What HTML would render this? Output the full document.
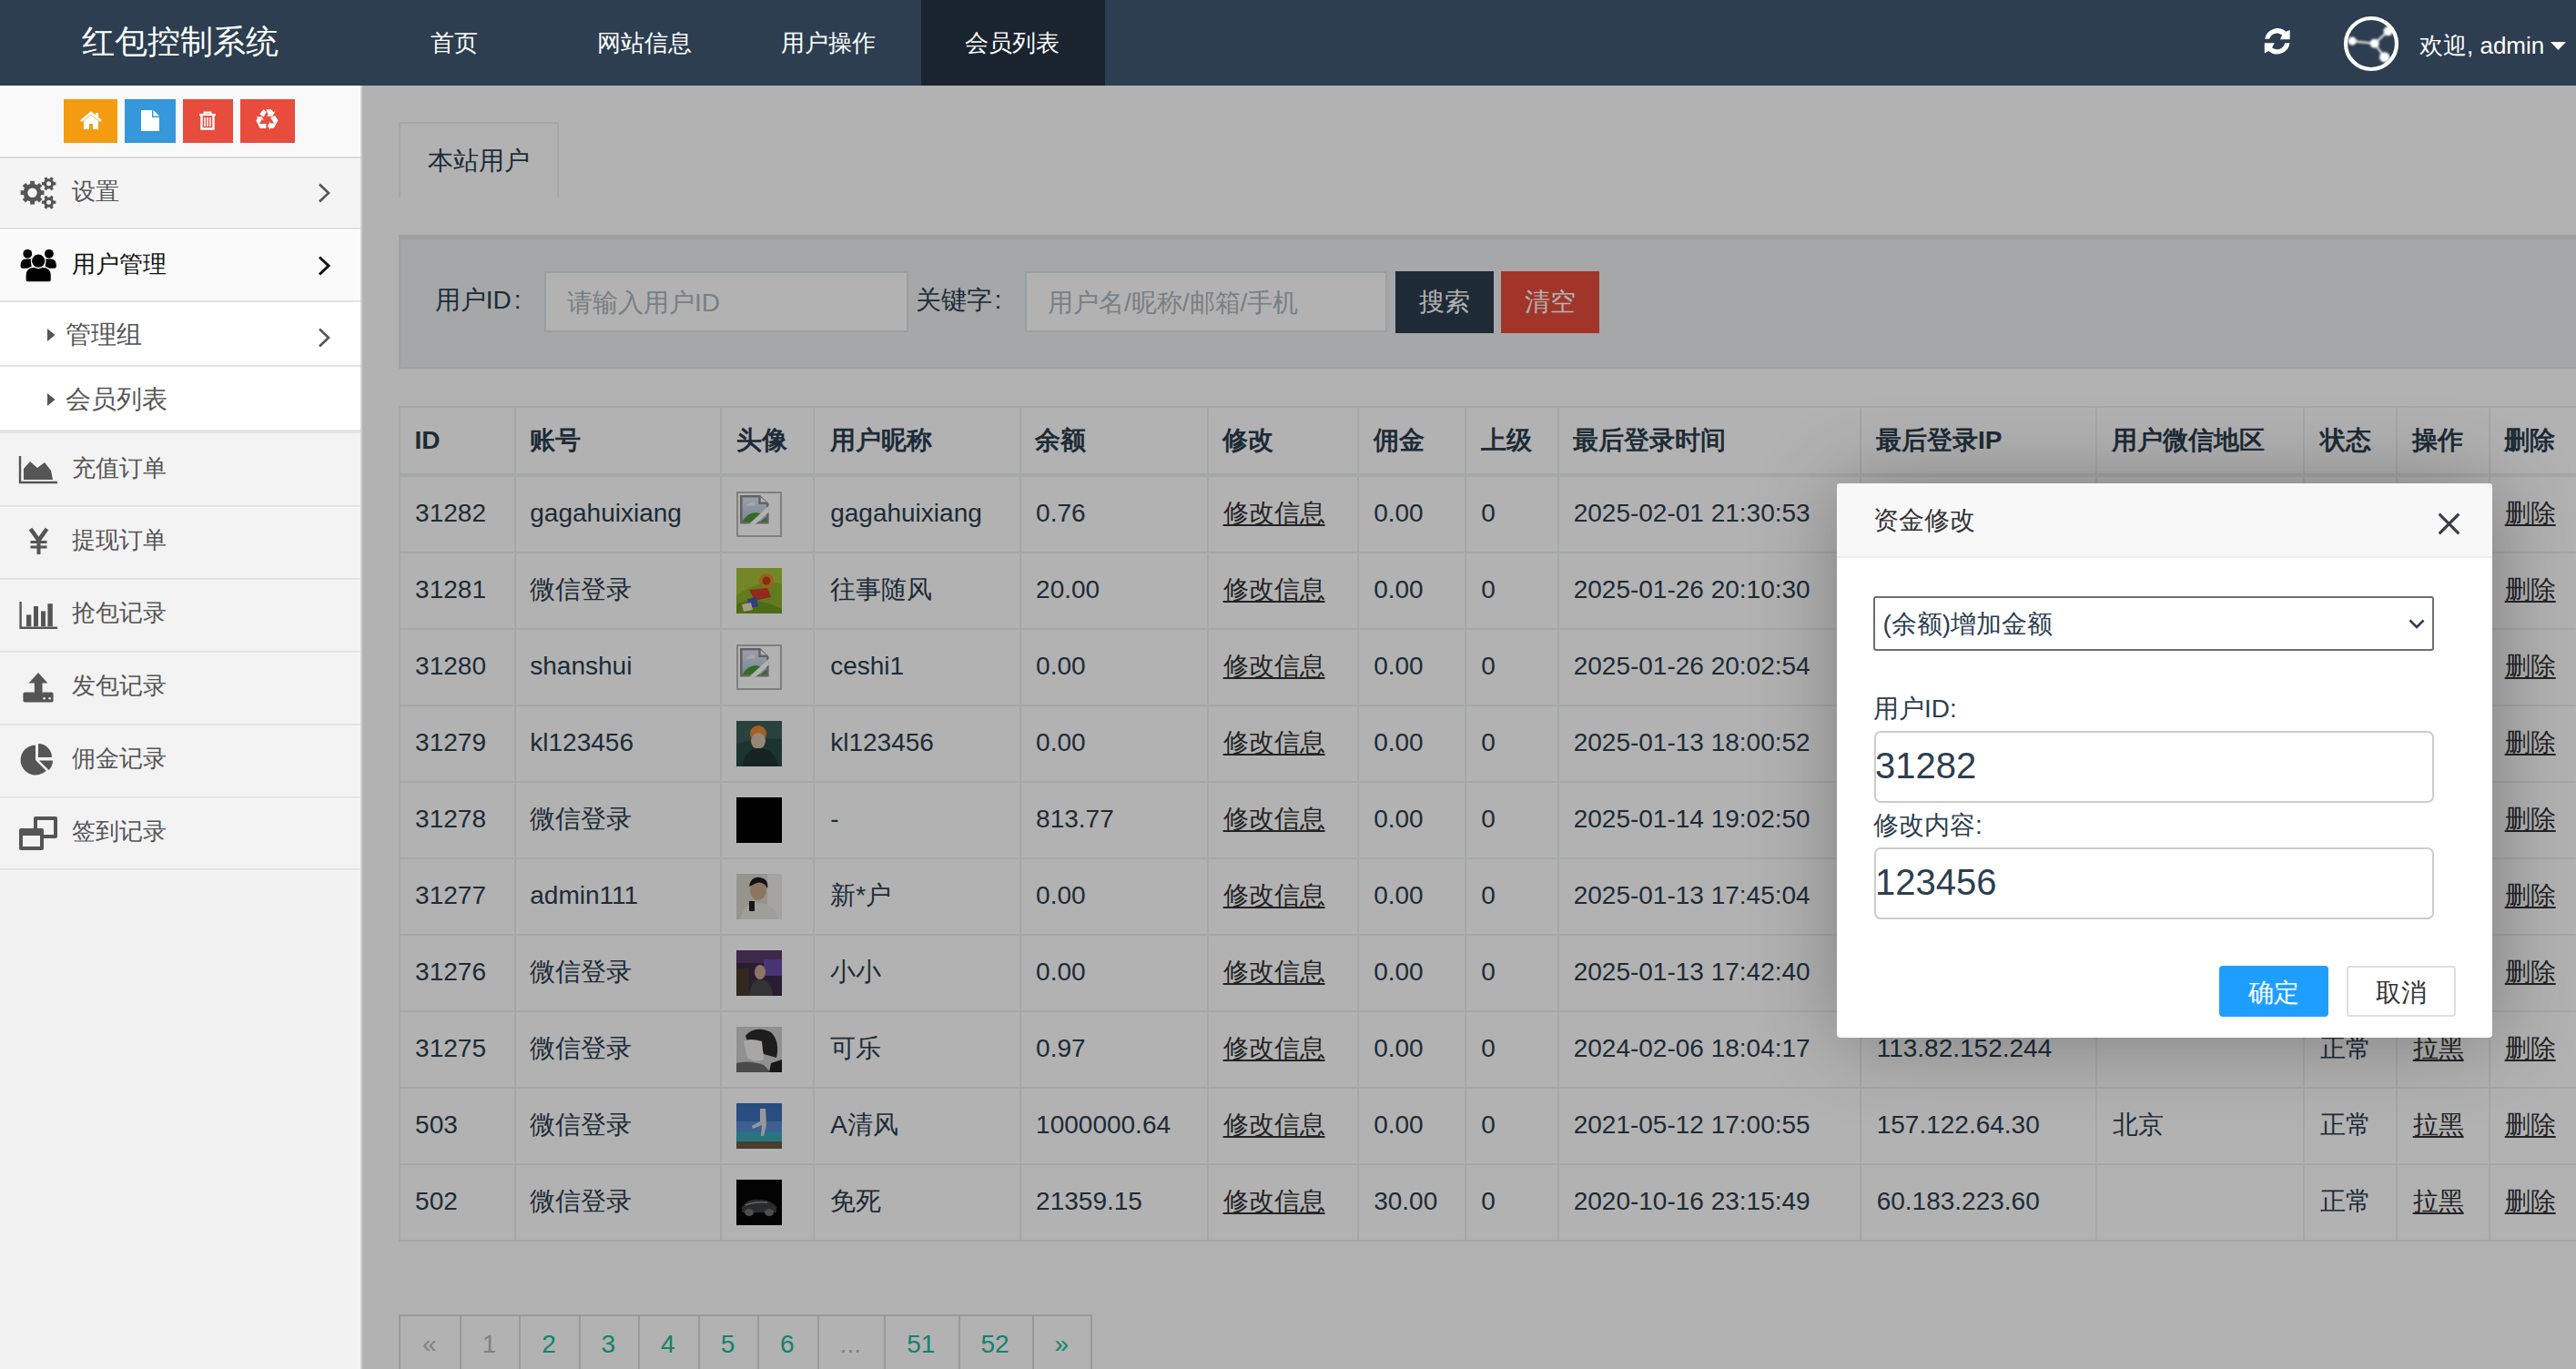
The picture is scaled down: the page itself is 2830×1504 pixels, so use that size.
<!DOCTYPE html><html><head><meta charset="utf-8"><title>红包控制系统</title><style>
*{margin:0;padding:0;box-sizing:border-box}
html,body{width:2830px;height:1504px;overflow:hidden;background:#fff;font-family:"Liberation Sans",sans-serif}
.t{position:absolute;white-space:nowrap;display:block}
.r{position:absolute}
.u{text-decoration:underline;text-decoration-thickness:2px;text-underline-offset:3px}
svg{position:absolute;overflow:visible}
</style></head><body>
<div class="r" style="left:398px;top:94px;width:2432px;height:1410px;background:#ffffff;"></div>
<div class="r" style="left:438px;top:134px;width:176px;height:83px;border:2px solid #ecf0f1;border-bottom:none"></div>
<span class="t " style="left:470px;top:162.5px;font-size:28px;line-height:28px;color:#2c3e50;font-weight:400;">本站用户</span>
<div class="r" style="left:438px;top:258px;width:2500px;height:147px;background:#ecf0f1;border:2px solid #e3e8ea;box-shadow:inset 0 3px 3px rgba(0,0,0,.05)"></div>
<span class="t " style="left:477.8px;top:316.2px;font-size:28px;line-height:28px;color:#2c3e50;font-weight:400;">用户ID</span>
<span class="t " style="left:564.7px;top:315.6px;font-size:28px;line-height:28px;color:#2c3e50;font-weight:400;">:</span>
<div class="r" style="left:598px;top:298px;width:400px;height:67px;background:#fff;border:2px solid #dce4ec"></div>
<span class="t " style="left:623px;top:318.5px;font-size:28px;line-height:28px;color:#acb6c0;font-weight:400;">请输入用户ID</span>
<span class="t " style="left:1005.5px;top:316.2px;font-size:28px;line-height:28px;color:#2c3e50;font-weight:400;">关键字</span>
<span class="t " style="left:1092.4px;top:315.6px;font-size:28px;line-height:28px;color:#2c3e50;font-weight:400;">:</span>
<div class="r" style="left:1126px;top:298px;width:398px;height:67px;background:#fff;border:2px solid #dce4ec"></div>
<span class="t " style="left:1151px;top:318.5px;font-size:28px;line-height:28px;color:#acb6c0;font-weight:400;">用户名/昵称/邮箱/手机</span>
<div class="r" style="left:1533px;top:298px;width:108px;height:68px;background:#2c3e50;"></div>
<span class="t " style="left:1559px;top:318px;font-size:28px;line-height:28px;color:#ffffff;font-weight:400;">搜索</span>
<div class="r" style="left:1649px;top:298px;width:108px;height:68px;background:#e74c3c;"></div>
<span class="t " style="left:1675px;top:318px;font-size:28px;line-height:28px;color:#ffffff;font-weight:400;">清空</span>
<div class="r" style="left:438px;top:446px;width:2392px;height:2px;background:#ecf0f1;"></div>
<div class="r" style="left:438px;top:520px;width:2392px;height:4px;background:#ecf0f1;"></div>
<div class="r" style="left:438px;top:606px;width:2392px;height:2px;background:#ecf0f1;"></div>
<div class="r" style="left:438px;top:690px;width:2392px;height:2px;background:#ecf0f1;"></div>
<div class="r" style="left:438px;top:774px;width:2392px;height:2px;background:#ecf0f1;"></div>
<div class="r" style="left:438px;top:858px;width:2392px;height:2px;background:#ecf0f1;"></div>
<div class="r" style="left:438px;top:942px;width:2392px;height:2px;background:#ecf0f1;"></div>
<div class="r" style="left:438px;top:1026px;width:2392px;height:2px;background:#ecf0f1;"></div>
<div class="r" style="left:438px;top:1110px;width:2392px;height:2px;background:#ecf0f1;"></div>
<div class="r" style="left:438px;top:1194px;width:2392px;height:2px;background:#ecf0f1;"></div>
<div class="r" style="left:438px;top:1278px;width:2392px;height:2px;background:#ecf0f1;"></div>
<div class="r" style="left:438px;top:1362px;width:2392px;height:2px;background:#ecf0f1;"></div>
<div class="r" style="left:438px;top:446px;width:2px;height:918px;background:#ecf0f1;"></div>
<div class="r" style="left:565px;top:446px;width:2px;height:918px;background:#ecf0f1;"></div>
<div class="r" style="left:791px;top:446px;width:2px;height:918px;background:#ecf0f1;"></div>
<div class="r" style="left:893px;top:446px;width:2px;height:918px;background:#ecf0f1;"></div>
<div class="r" style="left:1120px;top:446px;width:2px;height:918px;background:#ecf0f1;"></div>
<div class="r" style="left:1326px;top:446px;width:2px;height:918px;background:#ecf0f1;"></div>
<div class="r" style="left:1491px;top:446px;width:2px;height:918px;background:#ecf0f1;"></div>
<div class="r" style="left:1609px;top:446px;width:2px;height:918px;background:#ecf0f1;"></div>
<div class="r" style="left:1711px;top:446px;width:2px;height:918px;background:#ecf0f1;"></div>
<div class="r" style="left:2043px;top:446px;width:2px;height:918px;background:#ecf0f1;"></div>
<div class="r" style="left:2302px;top:446px;width:2px;height:918px;background:#ecf0f1;"></div>
<div class="r" style="left:2530px;top:446px;width:2px;height:918px;background:#ecf0f1;"></div>
<div class="r" style="left:2632px;top:446px;width:2px;height:918px;background:#ecf0f1;"></div>
<div class="r" style="left:2734px;top:446px;width:2px;height:918px;background:#ecf0f1;"></div>
<span class="t " style="left:455.4px;top:470px;font-size:28px;line-height:28px;color:#2c3e50;font-weight:700;">ID</span>
<span class="t " style="left:581.6px;top:470px;font-size:28px;line-height:28px;color:#2c3e50;font-weight:700;">账号</span>
<span class="t " style="left:808.9px;top:470px;font-size:28px;line-height:28px;color:#2c3e50;font-weight:700;">头像</span>
<span class="t " style="left:911.5px;top:470px;font-size:28px;line-height:28px;color:#2c3e50;font-weight:700;">用户昵称</span>
<span class="t " style="left:1137.4px;top:470px;font-size:28px;line-height:28px;color:#2c3e50;font-weight:700;">余额</span>
<span class="t " style="left:1342.9px;top:470px;font-size:28px;line-height:28px;color:#2c3e50;font-weight:700;">修改</span>
<span class="t " style="left:1508.5px;top:470px;font-size:28px;line-height:28px;color:#2c3e50;font-weight:700;">佣金</span>
<span class="t " style="left:1626.6px;top:470px;font-size:28px;line-height:28px;color:#2c3e50;font-weight:700;">上级</span>
<span class="t " style="left:1728px;top:470px;font-size:28px;line-height:28px;color:#2c3e50;font-weight:700;">最后登录时间</span>
<span class="t " style="left:2061px;top:470px;font-size:28px;line-height:28px;color:#2c3e50;font-weight:700;">最后登录IP</span>
<span class="t " style="left:2320.4px;top:470px;font-size:28px;line-height:28px;color:#2c3e50;font-weight:700;">用户微信地区</span>
<span class="t " style="left:2548.6px;top:470px;font-size:28px;line-height:28px;color:#2c3e50;font-weight:700;">状态</span>
<span class="t " style="left:2650px;top:470px;font-size:28px;line-height:28px;color:#2c3e50;font-weight:700;">操作</span>
<span class="t " style="left:2751px;top:470px;font-size:28px;line-height:28px;color:#2c3e50;font-weight:700;">删除</span>
<span class="t " style="left:456.1px;top:550px;font-size:28px;line-height:28px;color:#2c3e50;font-weight:400;">31282</span>
<span class="t " style="left:582.3px;top:550px;font-size:28px;line-height:28px;color:#2c3e50;font-weight:400;">gagahuixiang</span>
<div class="r" style="left:809px;top:540px;width:50px;height:50px;border:2px solid #b8b8b8"></div>
<svg style="left:813px;top:544px" width="32" height="32" viewBox="0 0 32 32"><defs><linearGradient id="sky" x1="0" y1="0" x2="0" y2="1"><stop offset="0" stop-color="#dde6f4"/><stop offset="1" stop-color="#aebfdc"/></linearGradient></defs><path d="M1.3 1.3H21.5L30.3 10V30.3H1.3Z" fill="url(#sky)" stroke="#8e8e8e" stroke-width="2.6"/><path d="M21.5 1.3V8.8H30.3" fill="#fff" stroke="#8e8e8e" stroke-width="2.4"/><path d="M2.6 29Q9 18.5 18 19Q22 19.5 24.5 21.5L18 29Z" fill="#4a9a32"/><path d="M22.5 29L29 23.5V29Z" fill="#4a9a32"/><path d="M9.8 31.8L31.8 11.6V18.2L17 31.8Z" fill="#ffffff"/><path d="M6.5 12Q8 8.5 11 9Q12.5 6.5 15 8Q17 8.5 16.5 11.5H6.5Z" fill="#f2f2f2"/></svg>
<span class="t " style="left:912.2px;top:550px;font-size:28px;line-height:28px;color:#2c3e50;font-weight:400;">gagahuixiang</span>
<span class="t " style="left:1138.1px;top:550px;font-size:28px;line-height:28px;color:#2c3e50;font-weight:400;">0.76</span>
<span class="t u" style="left:1343.6px;top:550px;font-size:28px;line-height:28px;color:#333333;font-weight:400;">修改信息</span>
<span class="t " style="left:1509.2px;top:550px;font-size:28px;line-height:28px;color:#2c3e50;font-weight:400;">0.00</span>
<span class="t " style="left:1627.3px;top:550px;font-size:28px;line-height:28px;color:#2c3e50;font-weight:400;">0</span>
<span class="t " style="left:1728.7px;top:550px;font-size:28px;line-height:28px;color:#2c3e50;font-weight:400;">2025-02-01 21:30:53</span>
<span class="t u" style="left:2751.7px;top:550px;font-size:28px;line-height:28px;color:#333333;font-weight:400;">删除</span>
<span class="t " style="left:456.1px;top:634px;font-size:28px;line-height:28px;color:#2c3e50;font-weight:400;">31281</span>
<span class="t " style="left:582.3px;top:634px;font-size:28px;line-height:28px;color:#2c3e50;font-weight:400;">微信登录</span>
<svg style="left:809px;top:624px" width="50" height="50" viewBox="0 0 50 50"><rect width="50" height="50" fill="#8cb02a"/><path d="M0 0H50V18Q30 10 0 30Z" fill="#a6c23a"/><path d="M0 40Q20 30 50 45V50H0Z" fill="#6f9a22"/><circle cx="33" cy="14" r="8" fill="#e08a2a"/><circle cx="33" cy="14" r="4.5" fill="#c0401a"/><path d="M14 24L34 22L38 32L20 36Z" fill="#d63a2a"/><path d="M12 34L22 32L24 42L14 44Z" fill="#4a58b8"/><path d="M6 40L16 38L18 46L8 48Z" fill="#f0e0c0"/></svg>
<span class="t " style="left:912.2px;top:634px;font-size:28px;line-height:28px;color:#2c3e50;font-weight:400;">往事随风</span>
<span class="t " style="left:1138.1px;top:634px;font-size:28px;line-height:28px;color:#2c3e50;font-weight:400;">20.00</span>
<span class="t u" style="left:1343.6px;top:634px;font-size:28px;line-height:28px;color:#333333;font-weight:400;">修改信息</span>
<span class="t " style="left:1509.2px;top:634px;font-size:28px;line-height:28px;color:#2c3e50;font-weight:400;">0.00</span>
<span class="t " style="left:1627.3px;top:634px;font-size:28px;line-height:28px;color:#2c3e50;font-weight:400;">0</span>
<span class="t " style="left:1728.7px;top:634px;font-size:28px;line-height:28px;color:#2c3e50;font-weight:400;">2025-01-26 20:10:30</span>
<span class="t u" style="left:2751.7px;top:634px;font-size:28px;line-height:28px;color:#333333;font-weight:400;">删除</span>
<span class="t " style="left:456.1px;top:718px;font-size:28px;line-height:28px;color:#2c3e50;font-weight:400;">31280</span>
<span class="t " style="left:582.3px;top:718px;font-size:28px;line-height:28px;color:#2c3e50;font-weight:400;">shanshui</span>
<div class="r" style="left:809px;top:708px;width:50px;height:50px;border:2px solid #b8b8b8"></div>
<svg style="left:813px;top:712px" width="32" height="32" viewBox="0 0 32 32"><defs><linearGradient id="sky" x1="0" y1="0" x2="0" y2="1"><stop offset="0" stop-color="#dde6f4"/><stop offset="1" stop-color="#aebfdc"/></linearGradient></defs><path d="M1.3 1.3H21.5L30.3 10V30.3H1.3Z" fill="url(#sky)" stroke="#8e8e8e" stroke-width="2.6"/><path d="M21.5 1.3V8.8H30.3" fill="#fff" stroke="#8e8e8e" stroke-width="2.4"/><path d="M2.6 29Q9 18.5 18 19Q22 19.5 24.5 21.5L18 29Z" fill="#4a9a32"/><path d="M22.5 29L29 23.5V29Z" fill="#4a9a32"/><path d="M9.8 31.8L31.8 11.6V18.2L17 31.8Z" fill="#ffffff"/><path d="M6.5 12Q8 8.5 11 9Q12.5 6.5 15 8Q17 8.5 16.5 11.5H6.5Z" fill="#f2f2f2"/></svg>
<span class="t " style="left:912.2px;top:718px;font-size:28px;line-height:28px;color:#2c3e50;font-weight:400;">ceshi1</span>
<span class="t " style="left:1138.1px;top:718px;font-size:28px;line-height:28px;color:#2c3e50;font-weight:400;">0.00</span>
<span class="t u" style="left:1343.6px;top:718px;font-size:28px;line-height:28px;color:#333333;font-weight:400;">修改信息</span>
<span class="t " style="left:1509.2px;top:718px;font-size:28px;line-height:28px;color:#2c3e50;font-weight:400;">0.00</span>
<span class="t " style="left:1627.3px;top:718px;font-size:28px;line-height:28px;color:#2c3e50;font-weight:400;">0</span>
<span class="t " style="left:1728.7px;top:718px;font-size:28px;line-height:28px;color:#2c3e50;font-weight:400;">2025-01-26 20:02:54</span>
<span class="t u" style="left:2751.7px;top:718px;font-size:28px;line-height:28px;color:#333333;font-weight:400;">删除</span>
<span class="t " style="left:456.1px;top:802px;font-size:28px;line-height:28px;color:#2c3e50;font-weight:400;">31279</span>
<span class="t " style="left:582.3px;top:802px;font-size:28px;line-height:28px;color:#2c3e50;font-weight:400;">kl123456</span>
<svg style="left:809px;top:792px" width="50" height="50" viewBox="0 0 50 50"><rect width="50" height="50" fill="#2a4a44"/><path d="M0 0H50V20Q30 18 0 25Z" fill="#3d5e58"/><circle cx="24" cy="14" r="9" fill="#e98a3a"/><ellipse cx="24" cy="22" rx="8" ry="9" fill="#d8c0a8"/><path d="M6 50Q10 30 25 30Q42 30 46 50Z" fill="#1f3430"/></svg>
<span class="t " style="left:912.2px;top:802px;font-size:28px;line-height:28px;color:#2c3e50;font-weight:400;">kl123456</span>
<span class="t " style="left:1138.1px;top:802px;font-size:28px;line-height:28px;color:#2c3e50;font-weight:400;">0.00</span>
<span class="t u" style="left:1343.6px;top:802px;font-size:28px;line-height:28px;color:#333333;font-weight:400;">修改信息</span>
<span class="t " style="left:1509.2px;top:802px;font-size:28px;line-height:28px;color:#2c3e50;font-weight:400;">0.00</span>
<span class="t " style="left:1627.3px;top:802px;font-size:28px;line-height:28px;color:#2c3e50;font-weight:400;">0</span>
<span class="t " style="left:1728.7px;top:802px;font-size:28px;line-height:28px;color:#2c3e50;font-weight:400;">2025-01-13 18:00:52</span>
<span class="t u" style="left:2751.7px;top:802px;font-size:28px;line-height:28px;color:#333333;font-weight:400;">删除</span>
<span class="t " style="left:456.1px;top:886px;font-size:28px;line-height:28px;color:#2c3e50;font-weight:400;">31278</span>
<span class="t " style="left:582.3px;top:886px;font-size:28px;line-height:28px;color:#2c3e50;font-weight:400;">微信登录</span>
<div class="r" style="left:809px;top:876px;width:50px;height:50px;background:#000;"></div>
<span class="t " style="left:912.2px;top:886px;font-size:28px;line-height:28px;color:#2c3e50;font-weight:400;">-</span>
<span class="t " style="left:1138.1px;top:886px;font-size:28px;line-height:28px;color:#2c3e50;font-weight:400;">813.77</span>
<span class="t u" style="left:1343.6px;top:886px;font-size:28px;line-height:28px;color:#333333;font-weight:400;">修改信息</span>
<span class="t " style="left:1509.2px;top:886px;font-size:28px;line-height:28px;color:#2c3e50;font-weight:400;">0.00</span>
<span class="t " style="left:1627.3px;top:886px;font-size:28px;line-height:28px;color:#2c3e50;font-weight:400;">0</span>
<span class="t " style="left:1728.7px;top:886px;font-size:28px;line-height:28px;color:#2c3e50;font-weight:400;">2025-01-14 19:02:50</span>
<span class="t u" style="left:2751.7px;top:886px;font-size:28px;line-height:28px;color:#333333;font-weight:400;">删除</span>
<span class="t " style="left:456.1px;top:970px;font-size:28px;line-height:28px;color:#2c3e50;font-weight:400;">31277</span>
<span class="t " style="left:582.3px;top:970px;font-size:28px;line-height:28px;color:#2c3e50;font-weight:400;">admin111</span>
<svg style="left:809px;top:960px" width="50" height="50" viewBox="0 0 50 50"><rect width="50" height="50" fill="#d8d4cc"/><rect x="34" y="0" width="16" height="50" fill="#ecebe6"/><ellipse cx="24" cy="18" rx="9" ry="11" fill="#c9a88c"/><path d="M14 14Q16 2 26 4Q36 6 34 16Q30 8 22 10Z" fill="#1a1a1a"/><path d="M4 50Q8 32 24 32Q42 32 46 50Z" fill="#e6e2dc"/><rect x="14" y="30" width="6" height="11" fill="#222"/></svg>
<span class="t " style="left:912.2px;top:970px;font-size:28px;line-height:28px;color:#2c3e50;font-weight:400;">新*户</span>
<span class="t " style="left:1138.1px;top:970px;font-size:28px;line-height:28px;color:#2c3e50;font-weight:400;">0.00</span>
<span class="t u" style="left:1343.6px;top:970px;font-size:28px;line-height:28px;color:#333333;font-weight:400;">修改信息</span>
<span class="t " style="left:1509.2px;top:970px;font-size:28px;line-height:28px;color:#2c3e50;font-weight:400;">0.00</span>
<span class="t " style="left:1627.3px;top:970px;font-size:28px;line-height:28px;color:#2c3e50;font-weight:400;">0</span>
<span class="t " style="left:1728.7px;top:970px;font-size:28px;line-height:28px;color:#2c3e50;font-weight:400;">2025-01-13 17:45:04</span>
<span class="t u" style="left:2751.7px;top:970px;font-size:28px;line-height:28px;color:#333333;font-weight:400;">删除</span>
<span class="t " style="left:456.1px;top:1054px;font-size:28px;line-height:28px;color:#2c3e50;font-weight:400;">31276</span>
<span class="t " style="left:582.3px;top:1054px;font-size:28px;line-height:28px;color:#2c3e50;font-weight:400;">微信登录</span>
<svg style="left:809px;top:1044px" width="50" height="50" viewBox="0 0 50 50"><rect width="50" height="50" fill="#3a2a48"/><rect x="0" y="0" width="50" height="14" fill="#5a3c6a"/><rect x="30" y="10" width="20" height="18" fill="#6a4aa8"/><rect x="0" y="20" width="14" height="30" fill="#4a3a2a"/><ellipse cx="26" cy="24" rx="6" ry="8" fill="#c8a890"/><path d="M14 50Q16 32 26 32Q38 32 40 50Z" fill="#4a4a4a"/></svg>
<span class="t " style="left:912.2px;top:1054px;font-size:28px;line-height:28px;color:#2c3e50;font-weight:400;">小小</span>
<span class="t " style="left:1138.1px;top:1054px;font-size:28px;line-height:28px;color:#2c3e50;font-weight:400;">0.00</span>
<span class="t u" style="left:1343.6px;top:1054px;font-size:28px;line-height:28px;color:#333333;font-weight:400;">修改信息</span>
<span class="t " style="left:1509.2px;top:1054px;font-size:28px;line-height:28px;color:#2c3e50;font-weight:400;">0.00</span>
<span class="t " style="left:1627.3px;top:1054px;font-size:28px;line-height:28px;color:#2c3e50;font-weight:400;">0</span>
<span class="t " style="left:1728.7px;top:1054px;font-size:28px;line-height:28px;color:#2c3e50;font-weight:400;">2025-01-13 17:42:40</span>
<span class="t u" style="left:2751.7px;top:1054px;font-size:28px;line-height:28px;color:#333333;font-weight:400;">删除</span>
<span class="t " style="left:456.1px;top:1138px;font-size:28px;line-height:28px;color:#2c3e50;font-weight:400;">31275</span>
<span class="t " style="left:582.3px;top:1138px;font-size:28px;line-height:28px;color:#2c3e50;font-weight:400;">微信登录</span>
<svg style="left:809px;top:1128px" width="50" height="50" viewBox="0 0 50 50"><rect width="50" height="50" fill="#cfcfcf"/><path d="M10 10Q20 -2 38 6Q48 16 44 34L30 30Q26 14 12 16Z" fill="#2a2a2a"/><path d="M8 16Q14 12 28 16L30 36Q20 40 12 34Z" fill="#f2efea"/><path d="M0 50L0 40Q14 36 30 42L38 50Z" fill="#6a6a6a"/><path d="M38 40L50 36V50H36Z" fill="#202020"/></svg>
<span class="t " style="left:912.2px;top:1138px;font-size:28px;line-height:28px;color:#2c3e50;font-weight:400;">可乐</span>
<span class="t " style="left:1138.1px;top:1138px;font-size:28px;line-height:28px;color:#2c3e50;font-weight:400;">0.97</span>
<span class="t u" style="left:1343.6px;top:1138px;font-size:28px;line-height:28px;color:#333333;font-weight:400;">修改信息</span>
<span class="t " style="left:1509.2px;top:1138px;font-size:28px;line-height:28px;color:#2c3e50;font-weight:400;">0.00</span>
<span class="t " style="left:1627.3px;top:1138px;font-size:28px;line-height:28px;color:#2c3e50;font-weight:400;">0</span>
<span class="t " style="left:1728.7px;top:1138px;font-size:28px;line-height:28px;color:#2c3e50;font-weight:400;">2024-02-06 18:04:17</span>
<span class="t " style="left:2061.7px;top:1138px;font-size:28px;line-height:28px;color:#2c3e50;font-weight:400;">113.82.152.244</span>
<span class="t " style="left:2549.3px;top:1138px;font-size:28px;line-height:28px;color:#2c3e50;font-weight:400;">正常</span>
<span class="t u" style="left:2650.7px;top:1138px;font-size:28px;line-height:28px;color:#333333;font-weight:400;">拉黑</span>
<span class="t u" style="left:2751.7px;top:1138px;font-size:28px;line-height:28px;color:#333333;font-weight:400;">删除</span>
<span class="t " style="left:456.1px;top:1222px;font-size:28px;line-height:28px;color:#2c3e50;font-weight:400;">503</span>
<span class="t " style="left:582.3px;top:1222px;font-size:28px;line-height:28px;color:#2c3e50;font-weight:400;">微信登录</span>
<svg style="left:809px;top:1212px" width="50" height="50" viewBox="0 0 50 50"><rect width="50" height="50" fill="#3d6fb8"/><rect y="20" width="50" height="12" fill="#5a8ad0"/><rect y="32" width="50" height="10" fill="#3aa8b8"/><rect y="42" width="50" height="8" fill="#6a5a44"/><path d="M26 6L32 6L33 24L30 36L27 36L28 24L18 28L17 25L26 20Z" fill="#d8d8e0"/></svg>
<span class="t " style="left:912.2px;top:1222px;font-size:28px;line-height:28px;color:#2c3e50;font-weight:400;">A清风</span>
<span class="t " style="left:1138.1px;top:1222px;font-size:28px;line-height:28px;color:#2c3e50;font-weight:400;">1000000.64</span>
<span class="t u" style="left:1343.6px;top:1222px;font-size:28px;line-height:28px;color:#333333;font-weight:400;">修改信息</span>
<span class="t " style="left:1509.2px;top:1222px;font-size:28px;line-height:28px;color:#2c3e50;font-weight:400;">0.00</span>
<span class="t " style="left:1627.3px;top:1222px;font-size:28px;line-height:28px;color:#2c3e50;font-weight:400;">0</span>
<span class="t " style="left:1728.7px;top:1222px;font-size:28px;line-height:28px;color:#2c3e50;font-weight:400;">2021-05-12 17:00:55</span>
<span class="t " style="left:2061.7px;top:1222px;font-size:28px;line-height:28px;color:#2c3e50;font-weight:400;">157.122.64.30</span>
<span class="t " style="left:2321.1px;top:1222px;font-size:28px;line-height:28px;color:#2c3e50;font-weight:400;">北京</span>
<span class="t " style="left:2549.3px;top:1222px;font-size:28px;line-height:28px;color:#2c3e50;font-weight:400;">正常</span>
<span class="t u" style="left:2650.7px;top:1222px;font-size:28px;line-height:28px;color:#333333;font-weight:400;">拉黑</span>
<span class="t u" style="left:2751.7px;top:1222px;font-size:28px;line-height:28px;color:#333333;font-weight:400;">删除</span>
<span class="t " style="left:456.1px;top:1306px;font-size:28px;line-height:28px;color:#2c3e50;font-weight:400;">502</span>
<span class="t " style="left:582.3px;top:1306px;font-size:28px;line-height:28px;color:#2c3e50;font-weight:400;">微信登录</span>
<svg style="left:809px;top:1296px" width="50" height="50" viewBox="0 0 50 50"><rect width="50" height="50" fill="#050505"/><path d="M6 30Q12 20 26 22Q38 22 44 30L44 36L6 36Z" fill="#3a4044"/><ellipse cx="14" cy="36" rx="5" ry="4" fill="#6a7074"/><ellipse cx="36" cy="36" rx="5" ry="4" fill="#6a7074"/><path d="M10 28Q20 24 34 25" stroke="#8a9094" stroke-width="1.5" fill="none"/></svg>
<span class="t " style="left:912.2px;top:1306px;font-size:28px;line-height:28px;color:#2c3e50;font-weight:400;">免死</span>
<span class="t " style="left:1138.1px;top:1306px;font-size:28px;line-height:28px;color:#2c3e50;font-weight:400;">21359.15</span>
<span class="t u" style="left:1343.6px;top:1306px;font-size:28px;line-height:28px;color:#333333;font-weight:400;">修改信息</span>
<span class="t " style="left:1509.2px;top:1306px;font-size:28px;line-height:28px;color:#2c3e50;font-weight:400;">30.00</span>
<span class="t " style="left:1627.3px;top:1306px;font-size:28px;line-height:28px;color:#2c3e50;font-weight:400;">0</span>
<span class="t " style="left:1728.7px;top:1306px;font-size:28px;line-height:28px;color:#2c3e50;font-weight:400;">2020-10-16 23:15:49</span>
<span class="t " style="left:2061.7px;top:1306px;font-size:28px;line-height:28px;color:#2c3e50;font-weight:400;">60.183.223.60</span>
<span class="t " style="left:2549.3px;top:1306px;font-size:28px;line-height:28px;color:#2c3e50;font-weight:400;">正常</span>
<span class="t u" style="left:2650.7px;top:1306px;font-size:28px;line-height:28px;color:#333333;font-weight:400;">拉黑</span>
<span class="t u" style="left:2751.7px;top:1306px;font-size:28px;line-height:28px;color:#333333;font-weight:400;">删除</span>
<div class="r" style="left:438px;top:1444px;width:762px;height:120px;border:2px solid #dddddd;background:#fff"></div>
<div class="r" style="left:505px;top:1444px;width:2px;height:120px;background:#dddddd;"></div>
<div class="r" style="left:570px;top:1444px;width:2px;height:120px;background:#dddddd;"></div>
<div class="r" style="left:636px;top:1444px;width:2px;height:120px;background:#dddddd;"></div>
<div class="r" style="left:701px;top:1444px;width:2px;height:120px;background:#dddddd;"></div>
<div class="r" style="left:767px;top:1444px;width:2px;height:120px;background:#dddddd;"></div>
<div class="r" style="left:832px;top:1444px;width:2px;height:120px;background:#dddddd;"></div>
<div class="r" style="left:898px;top:1444px;width:2px;height:120px;background:#dddddd;"></div>
<div class="r" style="left:971px;top:1444px;width:2px;height:120px;background:#dddddd;"></div>
<div class="r" style="left:1053px;top:1444px;width:2px;height:120px;background:#dddddd;"></div>
<div class="r" style="left:1134px;top:1444px;width:2px;height:120px;background:#dddddd;"></div>
<span class="t" style="left:438.6px;top:1463px;width:66.29999999999995px;text-align:center;font-size:28px;line-height:28px;color:#b4bcc2">«</span>
<span class="t" style="left:504.9px;top:1463px;width:65.10000000000002px;text-align:center;font-size:28px;line-height:28px;color:#b4bcc2">1</span>
<span class="t" style="left:570px;top:1463px;width:66px;text-align:center;font-size:28px;line-height:28px;color:#18bc9c">2</span>
<span class="t" style="left:636px;top:1463px;width:64.70000000000005px;text-align:center;font-size:28px;line-height:28px;color:#18bc9c">3</span>
<span class="t" style="left:700.7px;top:1463px;width:66.29999999999995px;text-align:center;font-size:28px;line-height:28px;color:#18bc9c">4</span>
<span class="t" style="left:767px;top:1463px;width:65.10000000000002px;text-align:center;font-size:28px;line-height:28px;color:#18bc9c">5</span>
<span class="t" style="left:832.1px;top:1463px;width:65.60000000000002px;text-align:center;font-size:28px;line-height:28px;color:#18bc9c">6</span>
<span class="t" style="left:897.7px;top:1463px;width:73.19999999999993px;text-align:center;font-size:28px;line-height:28px;color:#b4bcc2">...</span>
<span class="t" style="left:970.9px;top:1463px;width:81.69999999999993px;text-align:center;font-size:28px;line-height:28px;color:#18bc9c">51</span>
<span class="t" style="left:1052.6px;top:1463px;width:81.0px;text-align:center;font-size:28px;line-height:28px;color:#18bc9c">52</span>
<span class="t" style="left:1133.6px;top:1463px;width:65.20000000000005px;text-align:center;font-size:28px;line-height:28px;color:#18bc9c">»</span>
<div class="r" style="left:398px;top:94px;width:2432px;height:1410px;background:rgba(0,0,0,0.3);"></div>
<div class="r" style="left:2018px;top:531px;width:720px;height:609px;background:#fff;border-radius:4px;box-shadow:2px 2px 94px rgba(0,0,0,.3)"></div>
<div class="r" style="left:2018px;top:531px;width:720px;height:82px;background:#f8f8f8;border-bottom:2px solid #eeeeee;border-radius:4px 4px 0 0"></div>
<span class="t " style="left:2058px;top:558px;font-size:28px;line-height:28px;color:#333333;font-weight:400;">资金修改</span>
<svg style="left:2679px;top:564px" width="23" height="23" viewBox="0 0 23 23"><path d="M1.8 1.8L21.2 21.2M21.2 1.8L1.8 21.2" stroke="#3a3c48" stroke-width="3.1" stroke-linecap="square"/></svg>
<div class="r" style="left:2058px;top:655px;width:616px;height:60px;border:2px solid #6e6e6e;border-radius:3px;background:#fff"></div>
<span class="t " style="left:2068.5px;top:671.8px;font-size:28px;line-height:28px;color:#2c3e50;font-weight:400;">(余额)增加金额</span>
<svg style="left:2646px;top:679px" width="18" height="14" viewBox="0 0 18 14"><path d="M1.5 2.5L9 10L16.5 2.5" stroke="#2c3e50" stroke-width="2.6" fill="none"/></svg>
<span class="t " style="left:2058px;top:765px;font-size:28px;line-height:28px;color:#2c3e50;font-weight:400;">用户ID:</span>
<div class="r" style="left:2059px;top:803px;width:615px;height:79px;border:2px solid #cccccc;border-radius:7px;background:#fff"></div>
<span class="t " style="left:2060px;top:821px;font-size:40px;line-height:40px;color:#2c3e50;font-weight:400;">31282</span>
<span class="t " style="left:2058px;top:893px;font-size:28px;line-height:28px;color:#2c3e50;font-weight:400;">修改内容:</span>
<div class="r" style="left:2059px;top:931px;width:615px;height:79px;border:2px solid #cccccc;border-radius:7px;background:#fff"></div>
<span class="t " style="left:2060px;top:949px;font-size:40px;line-height:40px;color:#2c3e50;font-weight:400;">123456</span>
<div class="r" style="left:2438px;top:1061px;width:120px;height:56px;background:#1e9fff;border-radius:4px"></div>
<span class="t " style="left:2470px;top:1077px;font-size:28px;line-height:28px;color:#ffffff;font-weight:400;">确定</span>
<div class="r" style="left:2578px;top:1061px;width:120px;height:56px;background:#fff;border:2px solid #dedede;border-radius:4px"></div>
<span class="t " style="left:2610px;top:1077px;font-size:28px;line-height:28px;color:#333333;font-weight:400;">取消</span>
<div class="r" style="left:0px;top:0px;width:2830px;height:94px;background:#2c3e50;"></div>
<div class="r" style="left:1012px;top:0px;width:202px;height:94px;background:#1a242f;"></div>
<span class="t " style="left:90px;top:27.8px;font-size:36px;line-height:36px;color:#ffffff;font-weight:400;">红包控制系统</span>
<span class="t " style="left:472.5px;top:33.5px;font-size:26px;line-height:26px;color:#ffffff;font-weight:400;">首页</span>
<span class="t " style="left:656px;top:33.5px;font-size:26px;line-height:26px;color:#ffffff;font-weight:400;">网站信息</span>
<span class="t " style="left:858px;top:33.5px;font-size:26px;line-height:26px;color:#ffffff;font-weight:400;">用户操作</span>
<span class="t " style="left:1060px;top:33.5px;font-size:26px;line-height:26px;color:#ffffff;font-weight:400;">会员列表</span>
<svg style="left:2486px;top:30px" width="32" height="31" viewBox="0 0 32 31"><path d="M2.2 12.8A13.9 13.9 0 0 1 25.3 4.8L29.7 3.1V13.2H18.9L21.1 8.6A8.8 8.8 0 0 0 7.1 12.8Z" fill="#fff"/><path d="M1.8 17.3H12.8L10.1 22.3A8.8 8.8 0 0 0 24.2 17.3H29.5A14 14 0 0 1 6.3 25.9L1.8 28.4Z" fill="#fff"/></svg>
<svg style="left:2575px;top:18px" width="61" height="61" viewBox="0 0 61 61"><defs><filter id="bl" x="-20%" y="-20%" width="140%" height="140%"><feGaussianBlur stdDeviation="0.9"/></filter></defs><g filter="url(#bl)"><path d="M9.2 27.1L33.7 29.8L48.7 16.1M33.7 29.8L44.7 44.8" stroke="#e8e8e8" stroke-width="2.2" fill="none"/><circle cx="9.2" cy="27.1" r="4.6" fill="#fff"/><circle cx="33.7" cy="29.8" r="5" fill="#fff"/><circle cx="48.7" cy="16.1" r="5.2" fill="#fff"/><circle cx="44.7" cy="44.8" r="5.6" fill="#fff"/></g><circle cx="30" cy="30" r="28" stroke="#fff" stroke-width="4.2" fill="none"/></svg>
<span class="t " style="left:2658px;top:37px;font-size:26px;line-height:26px;color:#ffffff;font-weight:400;">欢迎, admin</span>
<svg style="left:2802px;top:46px" width="17" height="9" viewBox="0 0 17 9"><path d="M0 0H17L8.5 9Z" fill="#fff"/></svg>
<div class="r" style="left:0px;top:94px;width:396px;height:1410px;background:#f2f2f2;"></div>
<div class="r" style="left:396px;top:94px;width:2px;height:1410px;background:#cfcfcf;"></div>
<div class="r" style="left:0px;top:94px;width:396px;height:78px;background:#f9f9f9;"></div>
<div class="r" style="left:70px;top:109px;width:59px;height:48px;background:#f39c12;"></div>
<div class="r" style="left:137px;top:109px;width:56px;height:48px;background:#3498db;"></div>
<div class="r" style="left:201px;top:109px;width:55px;height:48px;background:#e74c3c;"></div>
<div class="r" style="left:264px;top:109px;width:60px;height:48px;background:#e74c3c;"></div>
<svg style="left:88px;top:123px" width="24" height="20" viewBox="0 0 24 20"><path d="M1 10L12 1L23 10" stroke="#fff" stroke-width="2.6" fill="none"/><path d="M4 10L12 3.5L20 10V19H14V13H10V19H4Z" fill="#fff"/><rect x="17" y="1" width="3" height="6" fill="#fff"/></svg>
<svg style="left:154px;top:120px" width="22" height="25" viewBox="0 0 22 25"><path d="M1 1H13V9H21V24H1Z" fill="#fff"/><path d="M14.5 1L21 7.5H14.5Z" fill="#fff"/></svg>
<svg style="left:218px;top:121px" width="20" height="23" viewBox="0 0 20 23"><path d="M1 5H19" stroke="#fff" stroke-width="2.2"/><path d="M6.5 5V2.5H13.5V5" stroke="#fff" stroke-width="2" fill="none"/><path d="M3.5 5.5V20.5H16.5V5.5" stroke="#fff" stroke-width="2.4" fill="none"/><path d="M7 8V18M10 8V18M13 8V18" stroke="#fff" stroke-width="1.6"/></svg>
<svg style="left:281px;top:120px" width="26" height="24" viewBox="0 0 26 24"><g fill="#fff"><path d="M4.1 5.6L8.4 0.2L11.8 3L8.6 8.4Z"/><path d="M11.4 0.3H17L19.1 3L21.2 2.3L18.6 7.7H12.3L13.7 5.8L12.3 2.8Z"/><path d="M16 9.3L21.2 7L24.5 12.4L22.6 15.4H20.2Z"/><path d="M20 15.4H22.6L20 20.8H16V22.9L13 18.2L16 13.3V15.4Z"/><path d="M0.1 8.2H6.8L8.6 12.3L6.6 11.3L3.8 16.2L0.4 12.4L2.1 9.3Z"/><path d="M3.4 15.9H11.4V21H4.6L0.4 12.4L2.4 11.6Z"/></g></svg>
<div class="r" style="left:0px;top:171px;width:396px;height:1px;background:#ffffff;"></div>
<div class="r" style="left:0px;top:172px;width:396px;height:2px;background:#dadada;"></div>
<div class="r" style="left:0px;top:174px;width:396px;height:76px;background:#f4f4f4;"></div>
<div class="r" style="left:0px;top:250px;width:396px;height:2px;background:#e2e2e2;"></div>
<div class="r" style="left:0px;top:252px;width:396px;height:78px;background:#fafafa;"></div>
<div class="r" style="left:0px;top:252px;width:396px;height:1px;background:#ffffff;"></div>
<div class="r" style="left:0px;top:330px;width:396px;height:2px;background:#e2e2e2;"></div>
<div class="r" style="left:0px;top:332px;width:396px;height:69px;background:#ffffff;"></div>
<div class="r" style="left:0px;top:401px;width:396px;height:2px;background:#e2e2e2;"></div>
<div class="r" style="left:0px;top:403px;width:396px;height:69px;background:#ffffff;"></div>
<div class="r" style="left:0px;top:472px;width:396px;height:4px;background:#e4e4e4;"></div>
<div class="r" style="left:0px;top:476px;width:396px;height:79px;background:#f3f3f3;"></div>
<div class="r" style="left:0px;top:557px;width:396px;height:78px;background:#f3f3f3;"></div>
<div class="r" style="left:0px;top:637px;width:396px;height:78px;background:#f3f3f3;"></div>
<div class="r" style="left:0px;top:717px;width:396px;height:78px;background:#f3f3f3;"></div>
<div class="r" style="left:0px;top:797px;width:396px;height:78px;background:#f3f3f3;"></div>
<div class="r" style="left:0px;top:877px;width:396px;height:78px;background:#f3f3f3;"></div>
<div class="r" style="left:0px;top:555px;width:396px;height:2px;background:#e2e2e2;"></div>
<div class="r" style="left:0px;top:557px;width:396px;height:1px;background:#fbfbfb;"></div>
<div class="r" style="left:0px;top:635px;width:396px;height:2px;background:#e2e2e2;"></div>
<div class="r" style="left:0px;top:637px;width:396px;height:1px;background:#fbfbfb;"></div>
<div class="r" style="left:0px;top:715px;width:396px;height:2px;background:#e2e2e2;"></div>
<div class="r" style="left:0px;top:717px;width:396px;height:1px;background:#fbfbfb;"></div>
<div class="r" style="left:0px;top:795px;width:396px;height:2px;background:#e2e2e2;"></div>
<div class="r" style="left:0px;top:797px;width:396px;height:1px;background:#fbfbfb;"></div>
<div class="r" style="left:0px;top:875px;width:396px;height:2px;background:#e2e2e2;"></div>
<div class="r" style="left:0px;top:877px;width:396px;height:1px;background:#fbfbfb;"></div>
<div class="r" style="left:0px;top:954px;width:396px;height:2px;background:#e2e2e2;"></div>
<div class="r" style="left:0px;top:956px;width:396px;height:1px;background:#fbfbfb;"></div>
<span class="t " style="left:79px;top:197px;font-size:26px;line-height:26px;color:#555555;font-weight:400;">设置</span>
<span class="t " style="left:79px;top:277px;font-size:26px;line-height:26px;color:#111111;font-weight:400;">用户管理</span>
<span class="t " style="left:72px;top:354px;font-size:28px;line-height:28px;color:#555555;font-weight:400;">管理组</span>
<span class="t " style="left:72px;top:425px;font-size:28px;line-height:28px;color:#555555;font-weight:400;">会员列表</span>
<span class="t " style="left:79px;top:501px;font-size:26px;line-height:26px;color:#555555;font-weight:400;">充值订单</span>
<span class="t " style="left:79px;top:580px;font-size:26px;line-height:26px;color:#555555;font-weight:400;">提现订单</span>
<span class="t " style="left:79px;top:660px;font-size:26px;line-height:26px;color:#555555;font-weight:400;">抢包记录</span>
<span class="t " style="left:79px;top:740px;font-size:26px;line-height:26px;color:#555555;font-weight:400;">发包记录</span>
<span class="t " style="left:79px;top:820px;font-size:26px;line-height:26px;color:#555555;font-weight:400;">佣金记录</span>
<span class="t " style="left:79px;top:900px;font-size:26px;line-height:26px;color:#555555;font-weight:400;">签到记录</span>
<svg style="left:349px;top:201px" width="15" height="22" viewBox="0 0 15 22"><path d="M2 1.5L12 11L2 20.5" stroke="#555555" stroke-width="2.6" fill="none"/></svg>
<svg style="left:349px;top:280.5px" width="15" height="22" viewBox="0 0 15 22"><path d="M2 1.5L12 11L2 20.5" stroke="#111" stroke-width="3.0" fill="none"/></svg>
<svg style="left:349px;top:360px" width="15" height="22" viewBox="0 0 15 22"><path d="M2 1.5L12 11L2 20.5" stroke="#555555" stroke-width="2.6" fill="none"/></svg>
<svg style="left:51px;top:360.5px" width="10" height="14" viewBox="0 0 10 14"><path d="M1 0L9.5 7L1 14Z" fill="#555555"/></svg>
<svg style="left:51px;top:431.5px" width="10" height="14" viewBox="0 0 10 14"><path d="M1 0L9.5 7L1 14Z" fill="#555555"/></svg>
<svg style="left:22px;top:194px" width="40" height="36" viewBox="0 0 40 36"><circle cx="13.55" cy="17.7" r="10" fill="#555"/><rect x="11.15" y="4.80" width="4.8" height="25.8" fill="#555" transform="rotate(0 13.55 17.7)"/><rect x="11.15" y="4.80" width="4.8" height="25.8" fill="#555" transform="rotate(45 13.55 17.7)"/><rect x="11.15" y="4.80" width="4.8" height="25.8" fill="#555" transform="rotate(90 13.55 17.7)"/><rect x="11.15" y="4.80" width="4.8" height="25.8" fill="#555" transform="rotate(135 13.55 17.7)"/><circle cx="13.55" cy="17.7" r="5.2" fill="#f4f4f4"/><circle cx="31.6" cy="7.8" r="5.6" fill="#555"/><rect x="30.00" y="0.10" width="3.2" height="15.4" fill="#555" transform="rotate(90 31.6 7.8)"/><rect x="30.00" y="0.10" width="3.2" height="15.4" fill="#555" transform="rotate(150 31.6 7.8)"/><rect x="30.00" y="0.10" width="3.2" height="15.4" fill="#555" transform="rotate(210 31.6 7.8)"/><circle cx="31.6" cy="7.8" r="2.5" fill="#f4f4f4"/><circle cx="31.6" cy="28.2" r="5.6" fill="#555"/><rect x="30.00" y="20.50" width="3.2" height="15.4" fill="#555" transform="rotate(90 31.6 28.2)"/><rect x="30.00" y="20.50" width="3.2" height="15.4" fill="#555" transform="rotate(150 31.6 28.2)"/><rect x="30.00" y="20.50" width="3.2" height="15.4" fill="#555" transform="rotate(210 31.6 28.2)"/><circle cx="31.6" cy="28.2" r="2.5" fill="#f4f4f4"/></svg>
<svg style="left:22px;top:274px" width="40" height="37" viewBox="0 0 40 37"><g fill="#000"><circle cx="8.3" cy="4.8" r="4.9"/><circle cx="31.9" cy="4.8" r="4.9"/><path d="M0.6 17Q0.6 10.6 6.5 10.4H12.5V20.7H2.6Q0.6 20.7 0.6 18.7Z"/><path d="M39.8 17Q39.8 10.6 33.9 10.4H27.9V20.7H37.8Q39.8 20.7 39.8 18.7Z"/></g><path d="M6 33.4V28.5Q6 19.3 15.5 19.3H24.9Q34.4 19.3 34.4 28.5V33.4Q34.4 35.9 31.9 35.9H8.5Q6 35.9 6 33.4Z" fill="#000" stroke="#f9f9f9" stroke-width="1.3"/><circle cx="20.2" cy="12.7" r="7.8" fill="#000" stroke="#f9f9f9" stroke-width="1.3"/></svg>
<svg style="left:21px;top:501px" width="42" height="30" viewBox="0 0 42 30"><path d="M1 0V29H42" stroke="#555" stroke-width="2.4" fill="none"/><path d="M5 26V14L12 6L20 13L28 7L35 16L37 26Z" fill="#555"/></svg>
<svg style="left:31px;top:580px" width="23" height="29" viewBox="0 0 23 29"><path d="M2.5 1L11.5 13.5L20.5 1" stroke="#555" stroke-width="4.6" fill="none"/><path d="M11.5 13V29" stroke="#555" stroke-width="4"/><path d="M2.5 15.5H20.5M2.5 21H20.5" stroke="#555" stroke-width="3"/></svg>
<svg style="left:21px;top:661px" width="42" height="31" viewBox="0 0 42 31"><path d="M1.6 0V28.7H42" stroke="#555" stroke-width="2.4" fill="none"/><rect x="8" y="14.4" width="5.3" height="12.8" fill="#555"/><rect x="16" y="5" width="5" height="22.2" fill="#555"/><rect x="24" y="10.4" width="5" height="16.8" fill="#555"/><rect x="31.4" y="2.2" width="5.4" height="25" fill="#555"/></svg>
<svg style="left:25px;top:739px" width="35" height="33" viewBox="0 0 35 33"><path d="M17 0L27.4 11.5H21.5V23H12.8V11.5H6.6Z" fill="#555"/><path d="M0.4 23.5Q0.4 21.5 2.4 21.5H12.8V23H21.5V21.5H31.6Q33.6 21.5 33.6 23.5V30.4Q33.6 32.4 31.6 32.4H2.4Q0.4 32.4 0.4 30.4Z" fill="#555"/><circle cx="23.6" cy="28.3" r="1.3" fill="#f3f3f3"/><circle cx="29.6" cy="28.3" r="1.3" fill="#f3f3f3"/></svg>
<svg style="left:23px;top:817px" width="36" height="35" viewBox="0 0 36 35"><path d="M16 18V1.5A16.5 16.5 0 1 0 27.7 29.7Z" fill="#555"/><path d="M19 15V0A15 15 0 0 1 34 15Z" fill="#555"/><path d="M20 18.5H35A15 15 0 0 1 30.6 29.1Z" fill="#555"/></svg>
<svg style="left:21px;top:897px" width="42" height="37" viewBox="0 0 42 37"><path d="M16 2Q16 0 18 0H40Q42 0 42 2V22Q42 24 40 24H27V20H38V4H20V13H16Z" fill="#555"/><path d="M0 15Q0 13 2 13H25Q27 13 27 15V35Q27 37 25 37H2Q0 37 0 35ZM4 21V33H23V21Z" fill="#555"/></svg>
</body></html>
